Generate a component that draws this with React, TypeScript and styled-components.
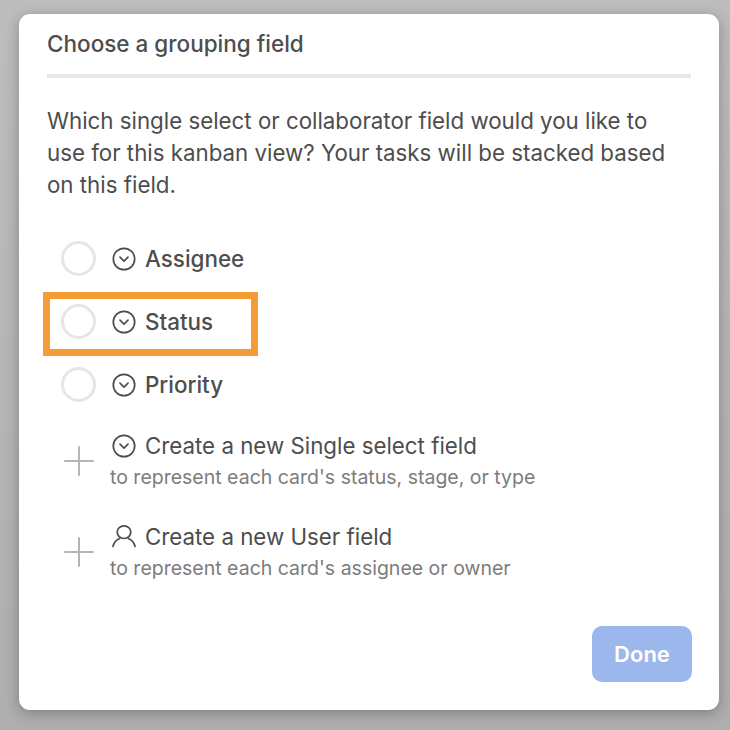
import React from 'react';
import styled, { createGlobalStyle } from 'styled-components';
import { Plus } from 'lucide-react';

const GlobalStyle = createGlobalStyle`
  html, body {
    margin: 0;
    padding: 0;
    height: 100%;
  }
  body {
    background: #bcbcbc;
    font-family: Inter, "Liberation Sans", sans-serif;
    overflow: hidden;
  }
`;

const Backdrop = styled.div`
  width: 730px;
  height: 730px;
  padding: 14px 11px 20px 19px;
  box-sizing: border-box;
  background: linear-gradient(to bottom, #bdbdbd, #aeaeae);
`;

const Dialog = styled.div`
  width: 700px;
  height: 696px;
  box-sizing: border-box;
  padding: 15px 28px 28px;
  background: #fff;
  border-radius: 11px;
  box-shadow: 0 3px 14px rgba(0, 0, 0, 0.28);
  display: flex;
  flex-direction: column;
`;

const Title = styled.h2`
  margin: 0;
  padding-bottom: 15px;
  border-bottom: 4px solid #e8e8e8;
  font-size: 22.5px;
  line-height: 30px;
  font-weight: 500;
  color: #4d4d4d;
`;

const Intro = styled.p`
  margin: 27px 0 0;
  font-size: 22.3px;
  line-height: 32px;
  font-weight: 400;
  color: #4d4d4d;
`;

const Options = styled.div`
  margin-top: 26px;
  display: flex;
  flex-direction: column;
`;

const OptionRow = styled.div`
  position: relative;
  height: 63px;
  display: flex;
  align-items: center;
  padding-left: 14px;
`;

const Radio = styled.span`
  width: 35px;
  height: 35px;
  box-sizing: border-box;
  border: 3px solid #e6e6e6;
  border-radius: 50%;
  margin-right: 16px;
  flex: none;
`;

const OptionLabel = styled.span`
  margin-left: 9px;
  font-size: 22.4px;
  font-weight: 500;
  color: #4d4d4d;
`;

const Highlight = styled.div`
  position: absolute;
  left: -4px;
  top: 2px;
  width: 215px;
  height: 64px;
  box-sizing: border-box;
  border: 7px solid #f49d37;
`;

const CreateRow = styled.div`
  height: 91px;
  box-sizing: border-box;
  padding: 0 0 4px 14px;
  display: flex;
  align-items: center;
`;

const PlusSlot = styled.span`
  width: 35px;
  margin: 3px 14px 0 0;
  flex: none;
  display: flex;
  justify-content: center;
  color: #b5b5b5;
  svg {
    flex: none;
  }
`;

const CreateText = styled.div`
  display: flex;
  flex-direction: column;
`;

const CreateTitle = styled.div`
  display: flex;
  align-items: center;
  height: 32px;
  font-size: 22.3px;
  font-weight: 400;
  color: #4d4d4d;
`;

const CreateIcon = styled.span`
  display: flex;
  margin-left: 2px;
`;

const CreateLabel = styled.span`
  margin-left: 9px;
`;

const Hint = styled.div`
  margin-top: 2px;
  font-size: 19.5px;
  line-height: 26px;
  color: #7c7c7c;
`;

const Footer = styled.div`
  margin-top: auto;
  display: flex;
  justify-content: flex-end;
`;

const DoneButton = styled.button`
  width: 100px;
  height: 56px;
  margin-right: -1px;
  border: none;
  border-radius: 10px;
  background: #9cb7ec;
  color: #fff;
  font-family: inherit;
  font-size: 22px;
  font-weight: 600;
`;

const ChevronCircle = () => (
  <svg width="24" height="24" viewBox="0 0 24 24" fill="none" stroke="#4d4d4d" strokeWidth="1.7" strokeLinecap="round" strokeLinejoin="round">
    <circle cx="12" cy="12" r="10.7" />
    <path d="M8 10.2l4 3.9 4-3.9" />
  </svg>
);

const UserOutline = () => (
  <svg width="24" height="24" viewBox="0 0 24 24" fill="none" stroke="#4d4d4d" strokeWidth="1.7" strokeLinecap="round" strokeLinejoin="round">
    <ellipse cx="12" cy="7.2" rx="6.8" ry="6.3" />
    <path d="M1 21.5c.8-4.2 3.6-6.6 6.6-8M23 21.5c-.8-4.2-3.6-6.6-6.6-8" />
  </svg>
);

const fields = ['Assignee', 'Status', 'Priority'];

const creators = [
  { icon: <ChevronCircle />, title: 'Create a new Single select field', hint: "to represent each card's status, stage, or type" },
  { icon: <UserOutline />, title: 'Create a new User field', hint: "to represent each card's assignee or owner" },
];

export default function App() {
  return (
    <>
      <GlobalStyle />
      <Backdrop>
        <Dialog>
          <Title>Choose a grouping field</Title>
          <Intro>
            Which single select or collaborator field would you like to use for this kanban view? Your tasks will be stacked based on this field.
          </Intro>
          <Options>
            {fields.map(name => (
              <OptionRow key={name}>
                <Radio />
                <ChevronCircle />
                <OptionLabel>{name}</OptionLabel>
                {name === 'Status' && <Highlight />}
              </OptionRow>
            ))}
            {creators.map(item => (
              <CreateRow key={item.title}>
                <PlusSlot>
                  <Plus size={48} strokeWidth={1} />
                </PlusSlot>
                <CreateText>
                  <CreateTitle>
                    <CreateIcon>{item.icon}</CreateIcon>
                    <CreateLabel>{item.title}</CreateLabel>
                  </CreateTitle>
                  <Hint>{item.hint}</Hint>
                </CreateText>
              </CreateRow>
            ))}
          </Options>
          <Footer>
            <DoneButton>Done</DoneButton>
          </Footer>
        </Dialog>
      </Backdrop>
    </>
  );
}
